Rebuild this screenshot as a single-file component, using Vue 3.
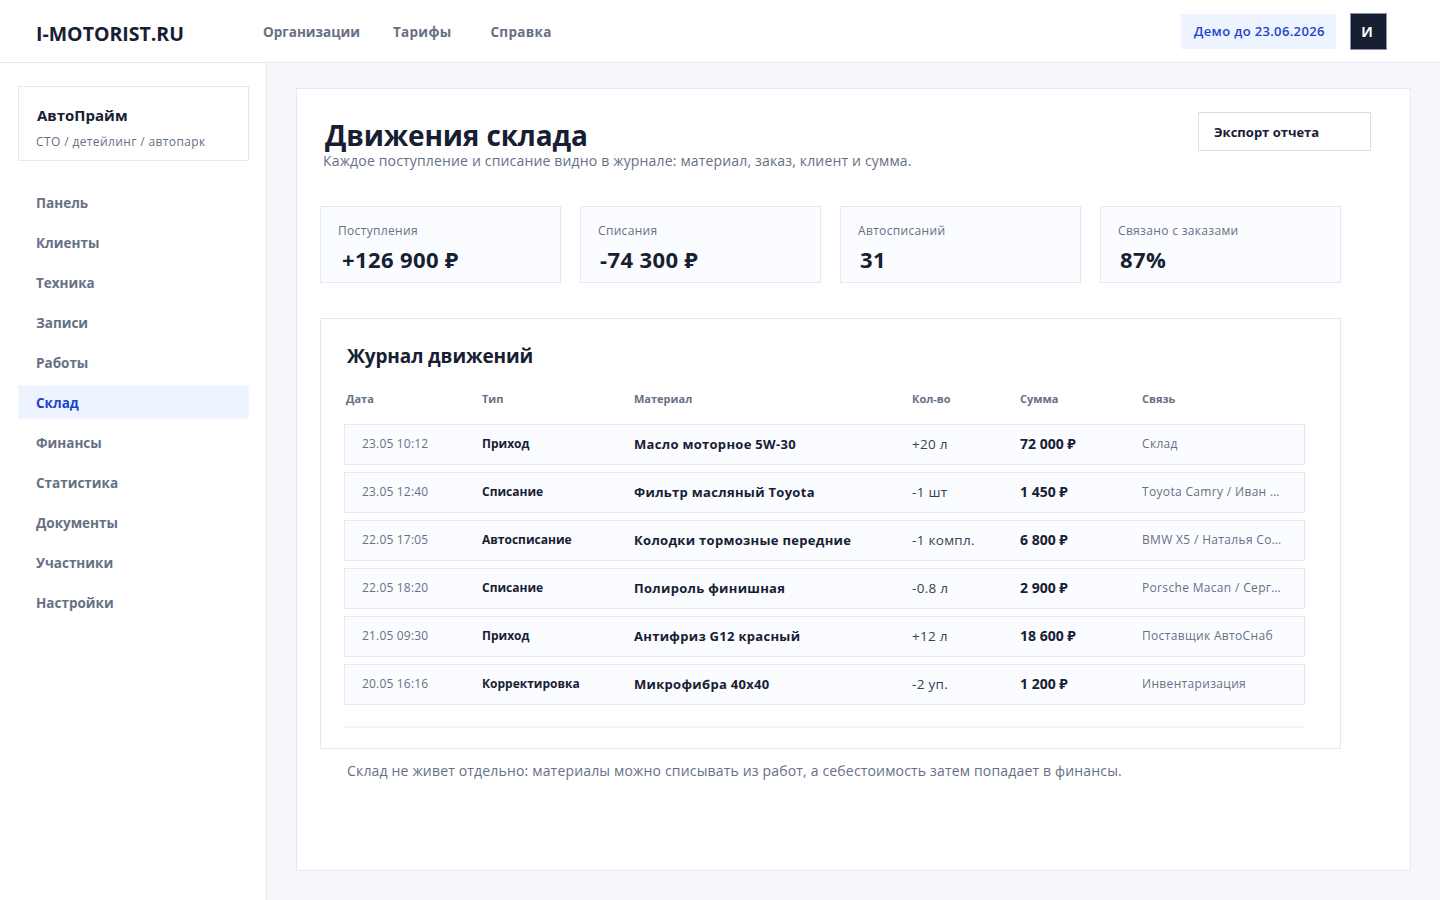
<script setup>
const nav = ['Панель','Клиенты','Техника','Записи','Работы','Склад','Финансы','Статистика','Документы','Участники','Настройки']
const stats = [
  { label: 'Поступления', value: '+126 900 ₽' },
  { label: 'Списания', value: '-74 300 ₽' },
  { label: 'Автосписаний', value: '31' },
  { label: 'Связано с заказами', value: '87%' },
]
const rows = [
  ['23.05 10:12','Приход','Масло моторное 5W-30','+20 л','72 000 ₽','Склад'],
  ['23.05 12:40','Списание','Фильтр масляный Toyota','-1 шт','1 450 ₽','Toyota Camry / Иван Петров'],
  ['22.05 17:05','Автосписание','Колодки тормозные передние','-1 компл.','6 800 ₽','BMW X5 / Наталья Соколова'],
  ['22.05 18:20','Списание','Полироль финишная','-0.8 л','2 900 ₽','Porsche Macan / Сергей Орлов'],
  ['21.05 09:30','Приход','Антифриз G12 красный','+12 л','18 600 ₽','Поставщик АвтоСнаб'],
  ['20.05 16:16','Корректировка','Микрофибра 40x40','-2 уп.','1 200 ₽','Инвентаризация'],
]
</script>

<template>
  <div class="app">
    <header class="top">
      <div class="logo">I-MOTORIST.RU</div>
      <nav class="topnav">
        <a class="t1">Организации</a>
        <a class="t2">Тарифы</a>
        <a class="t3">Справка</a>
      </nav>
      <div class="demo">Демо до 23.06.2026</div>
      <div class="avatar">И</div>
    </header>
    <div class="body">
      <aside class="side">
        <div class="company">
          <div class="cname">АвтоПрайм</div>
          <div class="csub">СТО / детейлинг / автопарк</div>
        </div>
        <ul class="menu">
          <li v-for="n in nav" :key="n" :class="{ active: n === 'Склад' }">{{ n }}</li>
        </ul>
      </aside>
      <main class="main">
        <section class="panel">
          <div class="head">
            <div class="titles">
              <h1>Движения склада</h1>
              <p class="lead">Каждое поступление и списание видно в журнале: материал, заказ, клиент и сумма.</p>
            </div>
            <button class="export">Экспорт отчета</button>
          </div>
          <div class="stats">
            <div v-for="s in stats" :key="s.label" class="stat">
              <div class="slabel">{{ s.label }}</div>
              <div class="svalue">{{ s.value }}</div>
            </div>
          </div>
          <div class="journal">
            <h2>Журнал движений</h2>
            <div class="thead grid">
              <span>Дата</span><span>Тип</span><span>Материал</span><span>Кол-во</span><span>Сумма</span><span>Связь</span>
            </div>
            <div v-for="r in rows" :key="r[0]" class="row grid">
              <span class="date">{{ r[0] }}</span>
              <span class="type">{{ r[1] }}</span>
              <span class="mat">{{ r[2] }}</span>
              <span class="qty">{{ r[3] }}</span>
              <span class="sum">{{ r[4] }}</span>
              <span class="link">{{ r[5] }}</span>
            </div>
            <div class="rule"></div>
          </div>
          <p class="foot">Склад не живет отдельно: материалы можно списывать из работ, а себестоимость затем попадает в финансы.</p>
        </section>
      </main>
    </div>
  </div>
</template>

<style>
html, body { margin: 0; background: #f6f8fc; }
</style>

<style scoped>
* { box-sizing: border-box; }
.app {
  width: 1440px; height: 900px; overflow: hidden;
  font-family: "Open Sans", "Noto Sans", sans-serif;
  color: #172033; background: #f6f8fc;
  display: flex; flex-direction: column;
}
.top {
  height: 63px; flex: none; background: #fff;
  border-bottom: 1px solid #e5e9f2;
  display: flex; align-items: center;
  padding: 0 53px 0 36px;
}
.logo { font-size: 19.5px; font-weight: 700; width: 227px; line-height: 28px; margin-top: 6px; }
.topnav { display: flex; font-size: 13.5px; font-weight: 700; color: #667085; flex: 1; padding-top: 1px; }
.t1 { margin-right: 33px; }
.t2 { margin-right: 39px; letter-spacing: .3px; }
.t3 { letter-spacing: .3px; }
.demo {
  width: 155px; height: 35px; background: #edf3ff; color: #1d44c8;
  font-size: 13px; font-weight: 600; letter-spacing: .35px; display: flex; align-items: center;
  padding-left: 13px; margin-right: 14px;
}
.avatar {
  width: 37px; height: 37px; background: #172033; color: #fff;
  border: 1px solid #8a93a6; font-size: 14px; font-weight: 700;
  display: flex; align-items: center; justify-content: center; padding-right: 3px;
}
.body { flex: 1; display: flex; min-height: 0; }
.side {
  width: 267px; flex: none; background: #fff;
  border-right: 1px solid #e5e9f2;
  padding: 23px 18px 0;
}
.company {
  height: 75px; border: 1px solid #e5e9f2;
  padding: 17px 18px 0 18px; width: 231px;
}
.cname { font-size: 15px; font-weight: 700; line-height: 22px; }
.csub { font-size: 12px; letter-spacing: .38px; color: #667085; line-height: 16px; margin-top: 8px; margin-left: -1px; }
.menu { list-style: none; margin: 24px 0 0; padding: 0; display: flex; flex-direction: column; gap: 6px; }
.menu li {
  height: 34px; line-height: 36px; padding-left: 18px;
  font-size: 13.5px; font-weight: 700; color: #667085; width: 231px;
}
.menu li.active { background: #edf3ff; color: #1d44c8; border: 1px solid #f4f7ff; padding-left: 17px; line-height: 34px; }
.main { flex: 1; padding: 25px 29px 29px; min-width: 0; }
.panel {
  height: 783px; background: #fff; border: 1px solid #e5e9f2;
  padding: 23px 23px 0;
}
.head { display: flex; justify-content: space-between; align-items: flex-start; height: 94px; }
h1 { margin: 7px 0 0 5px; font-size: 28px; font-weight: 700; letter-spacing: -.15px; line-height: 32px; color: #172033; }
.lead { margin: 1px 0 0 3px; font-size: 14px; letter-spacing: .165px; line-height: 18px; color: #667085; }
.export {
  width: 173px; height: 39px; margin: 0 16px 0 0; background: #fff;
  border: 1px solid #d8deea; font: 700 13px/1 "Open Sans", sans-serif; color: #172033;
  text-align: left; padding: 1px 15px 0;
}
.stats { display: flex; gap: 19px; height: 77px; }
.stat {
  width: 241px; background: #fbfcff; border: 1px solid #e5e9f2;
  padding: 15px 17px 0;
}
.slabel { font-size: 12px; letter-spacing: .33px; line-height: 17px; color: #667085; }
.svalue { font-size: 22px; font-weight: 700; letter-spacing: .4px; line-height: 30px; margin: 5px 0 0 4px; color: #172033; }
.stat:nth-child(n+2) .svalue { margin-left: 2px; }
.journal {
  width: 1021px; height: 431px; margin-top: 35px;
  border: 1px solid #e5e9f2; padding: 23px 23px 0;
}
h2 { margin: 0 0 0 3px; font-size: 19px; font-weight: 700; letter-spacing: -.13px; line-height: 28px; color: #172033; }
.grid { display: grid; grid-template-columns: 120px 152px 278px 108px 122px minmax(0, 1fr); align-items: center; }
.thead {
  font-size: 11px; font-weight: 700; color: #667085; line-height: 16px;
  margin-top: 21px; margin-bottom: 17px; padding-left: 2px; width: 960px;
  grid-template-columns: 136px 152px 278px 108px 122px minmax(0, 1fr);
}
.row {
  width: 961px; height: 41px; background: #fbfcff; border: 1px solid #e5e9f2;
  padding: 0 17px 2px; margin-bottom: 7px;
}
.date { font-size: 12px; letter-spacing: .18px; color: #667085; }
.type { font-size: 12px; font-weight: 700; color: #172033; }
.mat { font-size: 13px; font-weight: 700; letter-spacing: .3px; color: #172033; }
.qty { font-size: 13.5px; letter-spacing: .3px; color: #344054; }
.sum { font-size: 14px; font-weight: 700; color: #172033; }
.link { font-size: 12px; letter-spacing: .33px; color: #667085; white-space: nowrap; overflow: hidden; text-overflow: ellipsis; }
.rule { width: 960px; height: 2px; background: #f2f4f9; margin-top: 21px; }
.foot { margin: 13px 0 0 27px; font-size: 14px; letter-spacing: .17px; line-height: 18px; color: #667085; }
</style>
